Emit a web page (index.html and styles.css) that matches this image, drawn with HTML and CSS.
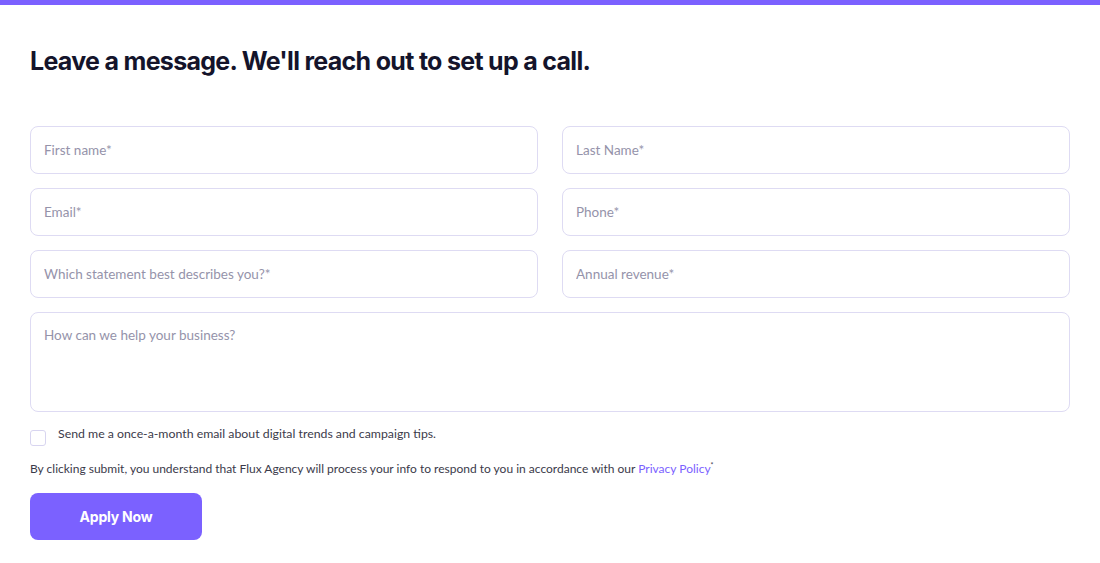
FILE: index.html
```html
<!DOCTYPE html>
<html lang="en">
<head>
  <meta charset="UTF-8">
  <meta name="viewport" content="width=device-width, initial-scale=1.0">
  <title>Contact</title>
  <link rel="stylesheet" href="styles.css">
</head>
<body>
  <div class="top-bar"></div>

  <main class="contact">
    <h1>Leave a message. We'll reach out to set up a call.</h1>

    <form class="contact-form" onsubmit="return false">
      <div class="grid">
        <input type="text" placeholder="First name*">
        <input type="text" placeholder="Last Name*">
        <input type="email" placeholder="Email*">
        <input type="tel" placeholder="Phone*">
        <input type="text" placeholder="Which statement best describes you?*">
        <input type="text" placeholder="Annual revenue*">
        <textarea class="wide" placeholder="How can we help your business?"></textarea>
      </div>

      <label class="opt-in">
        <input type="checkbox">
        <span>Send me a once-a-month email about digital trends and campaign tips.</span>
      </label>

      <p class="notice">By clicking submit, you understand that Flux Agency will process your info to respond to you in accordance with our <a href="#">Privacy Policy</a><sup>*</sup></p>

      <button type="submit">Apply Now</button>
    </form>
  </main>
</body>
</html>
```

FILE: styles.css
```css
/* General styles */
body {
  font-family: "Inter", "Liberation Sans", sans-serif;
  margin: 0;
  padding: 0;
  background-color: #fff;
  color: #14142b;
}

.top-bar {
  height: 5px;
  background-color: #7b61ff;
}

.contact {
  padding: 0 30px;
}

.contact h1 {
  margin: 40px 0 0;
  font-size: 25px;
  line-height: 32px;
  font-weight: 700;
  letter-spacing: -0.7px;
}

/* Form */
.contact-form {
  margin-top: 49px;
}

.grid {
  display: grid;
  grid-template-columns: 1fr 1fr;
  column-gap: 24px;
  row-gap: 14px;
}

.grid input,
.grid textarea {
  box-sizing: border-box;
  height: 48px;
  padding: 0 13px;
  font-family: "Lato", sans-serif;
  font-size: 13.5px;
  color: #14142b;
  border: 1.5px solid #dedbf3;
  border-radius: 8px;
  outline: none;
}

.grid textarea {
  grid-column: 1 / 3;
  height: 100px;
  padding-top: 14px;
  resize: none;
}

.grid input::placeholder,
.grid textarea::placeholder {
  color: #9593aa;
}

.opt-in {
  display: flex;
  align-items: flex-start;
  gap: 12px;
  margin-top: 14px;
  font-family: "Lato", sans-serif;
  font-size: 12.3px;
  color: #3b3a4a;
}

.opt-in input {
  appearance: none;
  width: 16px;
  height: 16px;
  margin: 4px 0 0;
  border: 1.5px solid #d8d5f0;
  border-radius: 3px;
}

.opt-in span {
  line-height: 16px;
}

.notice {
  margin: 15px 0 0;
  font-family: "Lato", sans-serif;
  font-size: 12px;
  color: #3b3a4a;
}

.notice a {
  color: #7b61ff;
  text-decoration: none;
}

.notice sup {
  font-size: 7px;
}

button {
  margin-top: 17px;
  width: 172px;
  height: 47px;
  background-color: #7b61ff;
  color: #fff;
  border: none;
  border-radius: 8px;
  font-family: "Inter", sans-serif;
  font-size: 14px;
  font-weight: 700;
  letter-spacing: -0.2px;
  cursor: pointer;
}
```
